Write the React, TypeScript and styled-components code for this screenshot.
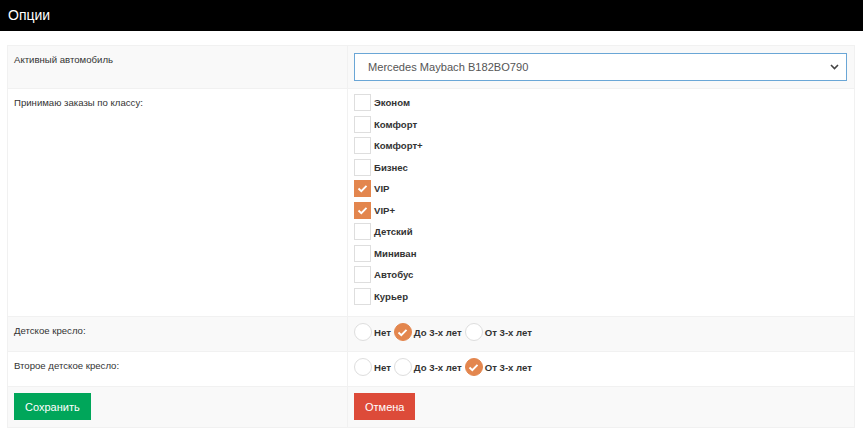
import React from "react";
import styled, { createGlobalStyle } from "styled-components";

const Global = createGlobalStyle`
  html, body { margin: 0; padding: 0; background: #fff; }
  body { font-family: "Liberation Sans", Arial, sans-serif; color: #333; }
  * { box-sizing: border-box; }
`;

const Header = styled.div`
  height: 31px;
  background: #000;
  color: #fff;
  font-size: 14px;
  display: flex;
  align-items: center;
  padding-left: 8px;
  padding-bottom: 1px;
`;

const Table = styled.div`
  margin: 14px 8px 0 7px;
  border: 1px solid #f1f1f1;
  border-bottom: none;
`;

const Row = styled.div<{ $striped?: boolean; $h: number }>`
  display: grid;
  grid-template-columns: 339px 1fr;
  height: ${(p) => p.$h}px;
  background: ${(p) => (p.$striped ? "#f9f9f9" : "#fff")};
  border-bottom: 1px solid #f1f1f1;
`;

const LabelCell = styled.div<{ $pt?: number }>`
  font-size: 9.6px;
  line-height: 14px;
  padding: ${(p) => p.$pt ?? 7}px 7px 8px 6px;
  color: #333;
`;

const ValueCell = styled.div<{ $pt?: number }>`
  border-left: 1px solid #f1f1f1;
  padding: ${(p) => p.$pt ?? 7}px 7px 7px 6px;
`;

const Select = styled.div`
  height: 28px;
  border: 1px solid #6aa6d6;
  background: #fff;
  display: flex;
  align-items: center;
  justify-content: space-between;
  padding: 0 7px 0 13px;
  font-size: 11.1px;
  color: #555;
`;

const CheckList = styled.div`
  display: flex;
  flex-direction: column;
  gap: 4.56px;
`;

const CheckItem = styled.label`
  display: flex;
  align-items: center;
  gap: 3px;
  font-size: 9.6px;
  font-weight: bold;
  color: #333;
  height: 17px;
`;

const Box = styled.span<{ $on?: boolean }>`
  width: 17px;
  height: 17px;
  flex: none;
  display: flex;
  align-items: center;
  justify-content: center;
  border: 1px solid ${(p) => (p.$on ? "#e3864e" : "#dedede")};
  background: ${(p) => (p.$on ? "#e3864e" : "#fff")};
`;

const RadioRow = styled.div`
  display: flex;
  align-items: center;
  font-size: 9.6px;
  font-weight: bold;
  color: #333;
  height: 18px;
`;

const RadioItem = styled.label`
  display: flex;
  align-items: center;
  gap: 2px;
  margin-right: 3px;
`;

const Circle = styled.span<{ $on?: boolean }>`
  width: 18px;
  height: 18px;
  flex: none;
  border-radius: 50%;
  display: flex;
  align-items: center;
  justify-content: center;
  border: 1px solid ${(p) => (p.$on ? "#e3864e" : "#dedede")};
  background: ${(p) => (p.$on ? "#e3864e" : "#fff")};
`;

const Button = styled.button<{ $color: string }>`
  height: 27px;
  padding: 0 11px;
  border: none;
  border-radius: 0;
  background: ${(p) => p.$color};
  color: #fff;
  font-family: "Liberation Sans", Arial, sans-serif;
  font-size: 11px;
`;

const Check = () => (
  <svg width="11" height="9" viewBox="0 0 11 9">
    <path d="M1.5 4.5 L4.3 7.2 L9.5 1.8" fill="none" stroke="#fff" strokeWidth="1.9" />
  </svg>
);

const Chevron = () => (
  <svg width="9" height="6" viewBox="0 0 9 6">
    <path d="M1 1 L4.5 4.5 L8 1" fill="none" stroke="#444" strokeWidth="1.6" />
  </svg>
);

const classes: [string, boolean][] = [
  ["Эконом", false],
  ["Комфорт", false],
  ["Комфорт+", false],
  ["Бизнес", false],
  ["VIP", true],
  ["VIP+", true],
  ["Детский", false],
  ["Миниван", false],
  ["Автобус", false],
  ["Курьер", false],
];

const opts = ["Нет", "До 3-х лет", "От 3-х лет"];

const Radios = ({ sel }: { sel: number }) => (
  <RadioRow>
    {opts.map((o, i) => (
      <RadioItem key={o}>
        <Circle $on={i === sel}>{i === sel && <Check />}</Circle>
        {o}
      </RadioItem>
    ))}
  </RadioRow>
);

export default function App() {
  return (
    <>
      <Global />
      <Header>Опции</Header>
      <Table>
        <Row $striped $h={43}>
          <LabelCell>Активный автомобиль</LabelCell>
          <ValueCell $pt={7}>
            <Select>
              <span>Mercedes Maybach B182BO790</span>
              <Chevron />
            </Select>
          </ValueCell>
        </Row>
        <Row $h={228}>
          <LabelCell>Принимаю заказы по классу:</LabelCell>
          <ValueCell $pt={5}>
            <CheckList>
              {classes.map(([n, on]) => (
                <CheckItem key={n}>
                  <Box $on={on}>{on && <Check />}</Box>
                  {n}
                </CheckItem>
              ))}
            </CheckList>
          </ValueCell>
        </Row>
        <Row $striped $h={35}>
          <LabelCell>Детское кресло:</LabelCell>
          <ValueCell $pt={6}>
            <Radios sel={1} />
          </ValueCell>
        </Row>
        <Row $h={35}>
          <LabelCell>Второе детское кресло:</LabelCell>
          <ValueCell $pt={6}>
            <Radios sel={2} />
          </ValueCell>
        </Row>
        <Row $striped $h={41}>
          <LabelCell $pt={6}>
            <Button $color="#00a65a">Сохранить</Button>
          </LabelCell>
          <ValueCell $pt={6}>
            <Button $color="#dd4b39">Отмена</Button>
          </ValueCell>
        </Row>
      </Table>
    </>
  );
}
